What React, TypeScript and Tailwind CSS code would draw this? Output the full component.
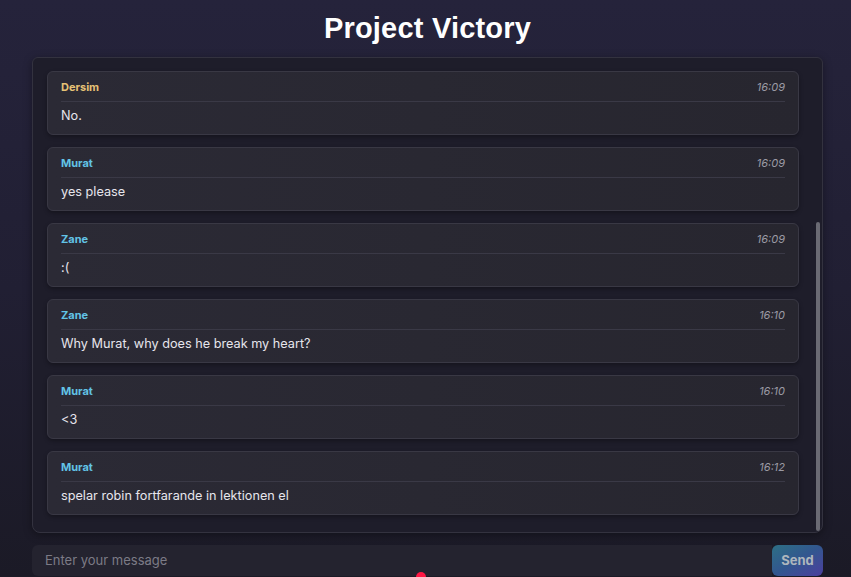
import React from "react";

const messages = [
  { name: "Dersim", color: "text-[#e6c276]", time: "16:09", text: "No." },
  { name: "Murat", color: "text-[#62c3e6]", time: "16:09", text: "yes please" },
  { name: "Zane", color: "text-[#62c3e6]", time: "16:09", text: ":(" },
  { name: "Zane", color: "text-[#62c3e6]", time: "16:10", text: "Why Murat, why does he break my heart?" },
  { name: "Murat", color: "text-[#62c3e6]", time: "16:10", text: "<3" },
  { name: "Murat", color: "text-[#62c3e6]", time: "16:12", text: "spelar robin fortfarande in lektionen el" },
];

export default function App() {
  return (
    <div className="relative h-[577px] w-[851px] overflow-hidden bg-gradient-to-b from-[#25233b] via-[#211f33] to-[#1b1a26] font-['Inter','Liberation_Sans',sans-serif]">
      <div className="flex flex-col pl-8 pr-7">
        <div className="flex h-[57px] items-center justify-center">
          <h1 className="text-[29px] font-bold tracking-[0.2px] text-white font-['Liberation_Sans','Arial',sans-serif]">
            Project Victory
          </h1>
        </div>
        <div className="relative h-[476px] rounded-t-md rounded-b-lg border border-[#33323f] bg-[#1e1d2a] pl-[14px] pr-[23px] pt-[13px] shadow-[0_2px_8px_rgba(0,0,0,0.35)]">
          <div className="flex flex-col gap-[12px]">
            {messages.map((m, i) => (
              <div
                key={i}
                className="flex h-[64px] flex-col rounded-md border border-[#393844] bg-gradient-to-r from-[#2b2a35] to-[#27262f] px-[13px] shadow-[0_2px_4px_rgba(0,0,0,0.3)]"
              >
                <div className="flex h-[30px] items-center justify-between border-b border-[#3a3946] pt-[2px]">
                  <span className={`text-[11px] font-bold ${m.color}`}>{m.name}</span>
                  <span className="text-[11px] italic text-[#9b9aa4]">{m.time}</span>
                </div>
                <div className="flex flex-1 items-center pb-[5px] text-[12.7px] text-[#e6e5ec]">{m.text}</div>
              </div>
            ))}
          </div>
          <div className="absolute right-[2px] top-[164px] h-[309px] w-[4px] rounded-full bg-[#6a6a73]" />
        </div>
        <div className="mt-[12px] flex h-[31px] items-stretch">
          <input
            className="flex-1 rounded-l-md bg-[#24232f] px-[13px] text-[13px] text-white outline-none placeholder:text-[#7c7b86]"
            placeholder="Enter your message"
          />
          <button className="w-[51px] rounded-md bg-gradient-to-br from-[#2d6f84] via-[#32568f] to-[#4a3d9e] text-[13px] font-bold text-[#aeb6bd]">
            Send
          </button>
        </div>
      </div>
      <div className="absolute left-[416px] top-[572px] h-[10px] w-[10px] rounded-full bg-[#ff1744]" />
    </div>
  );
}
